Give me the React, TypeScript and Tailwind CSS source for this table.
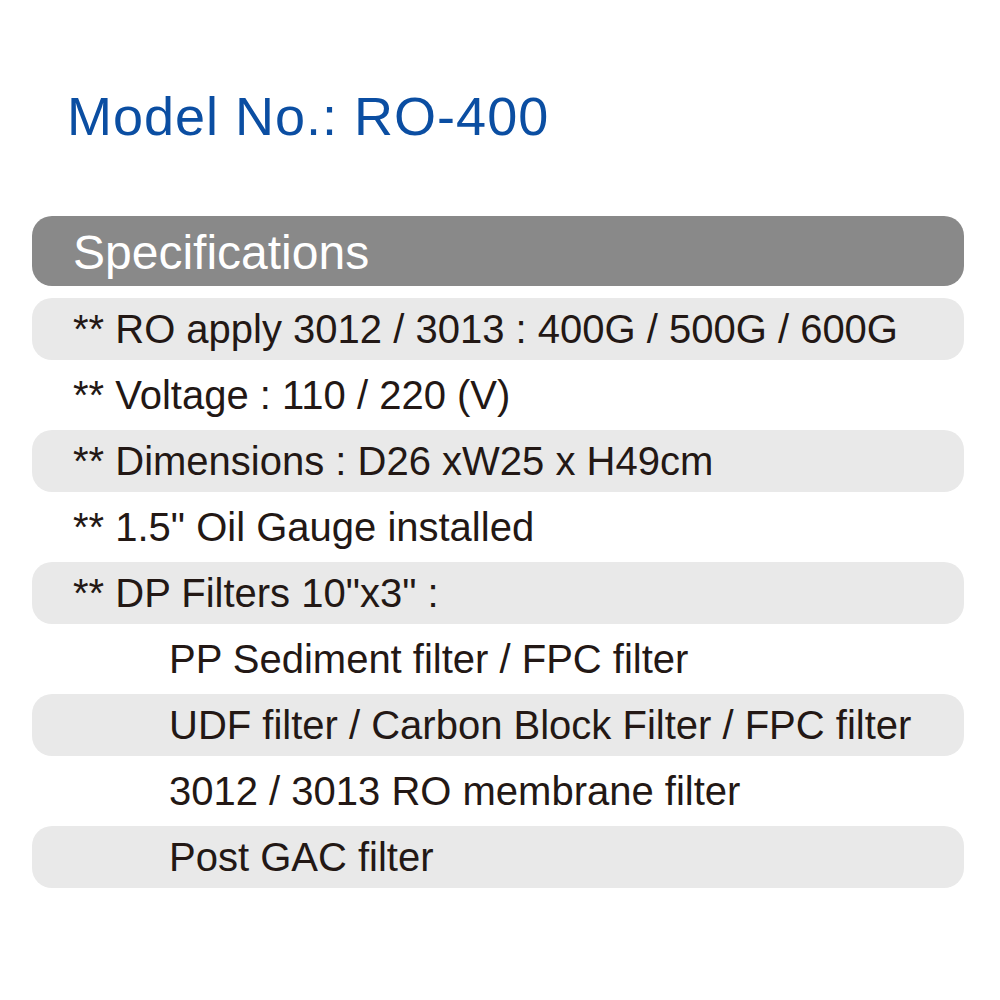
import React from 'react'

type Row = { text: string; indent?: boolean; shaded: boolean }

const rows: Row[] = [
  { text: '** RO apply 3012 / 3013 : 400G / 500G / 600G', shaded: true },
  { text: '** Voltage : 110 / 220 (V)', shaded: false },
  { text: '** Dimensions : D26 xW25 x H49cm', shaded: true },
  { text: '** 1.5" Oil Gauge installed', shaded: false },
  { text: '** DP Filters 10"x3" :', shaded: true },
  { text: 'PP Sediment filter / FPC filter', indent: true, shaded: false },
  { text: 'UDF filter / Carbon Block Filter / FPC filter', indent: true, shaded: true },
  { text: '3012 / 3013 RO membrane filter', indent: true, shaded: false },
  { text: 'Post GAC filter', indent: true, shaded: true },
]

const App: React.FC = () => {
  return (
    <div className="w-[1000px] h-[1000px] bg-white font-['Liberation_Sans',Arial,sans-serif]">
      <div className="px-[32px] pt-[84px]">
        <h1 className="pl-[35px] text-[54px] leading-[64px] text-[#0b4ea2] font-normal tracking-[1px]">
          Model No.: RO-400
        </h1>
        <div className="mt-[68px] h-[70px] w-[932px] rounded-[20px] bg-[#898989] flex items-center pl-[41px] pt-[3px]">
          <span className="text-[48px] text-white leading-none">Specifications</span>
        </div>
        <div className="mt-[12px] flex flex-col gap-[4px] w-[932px]">
          {rows.map((row) => (
            <div
              key={row.text}
              className={
                'h-[62px] rounded-[20px] flex items-center ' +
                (row.shaded ? 'bg-[#e9e9e9] ' : '') +
                (row.indent ? 'pl-[137px]' : 'pl-[41px]')
              }
            >
              <span className="text-[40px] leading-none text-[#231815] whitespace-pre">{row.text}</span>
            </div>
          ))}
        </div>
      </div>
    </div>
  )
}

export default App
